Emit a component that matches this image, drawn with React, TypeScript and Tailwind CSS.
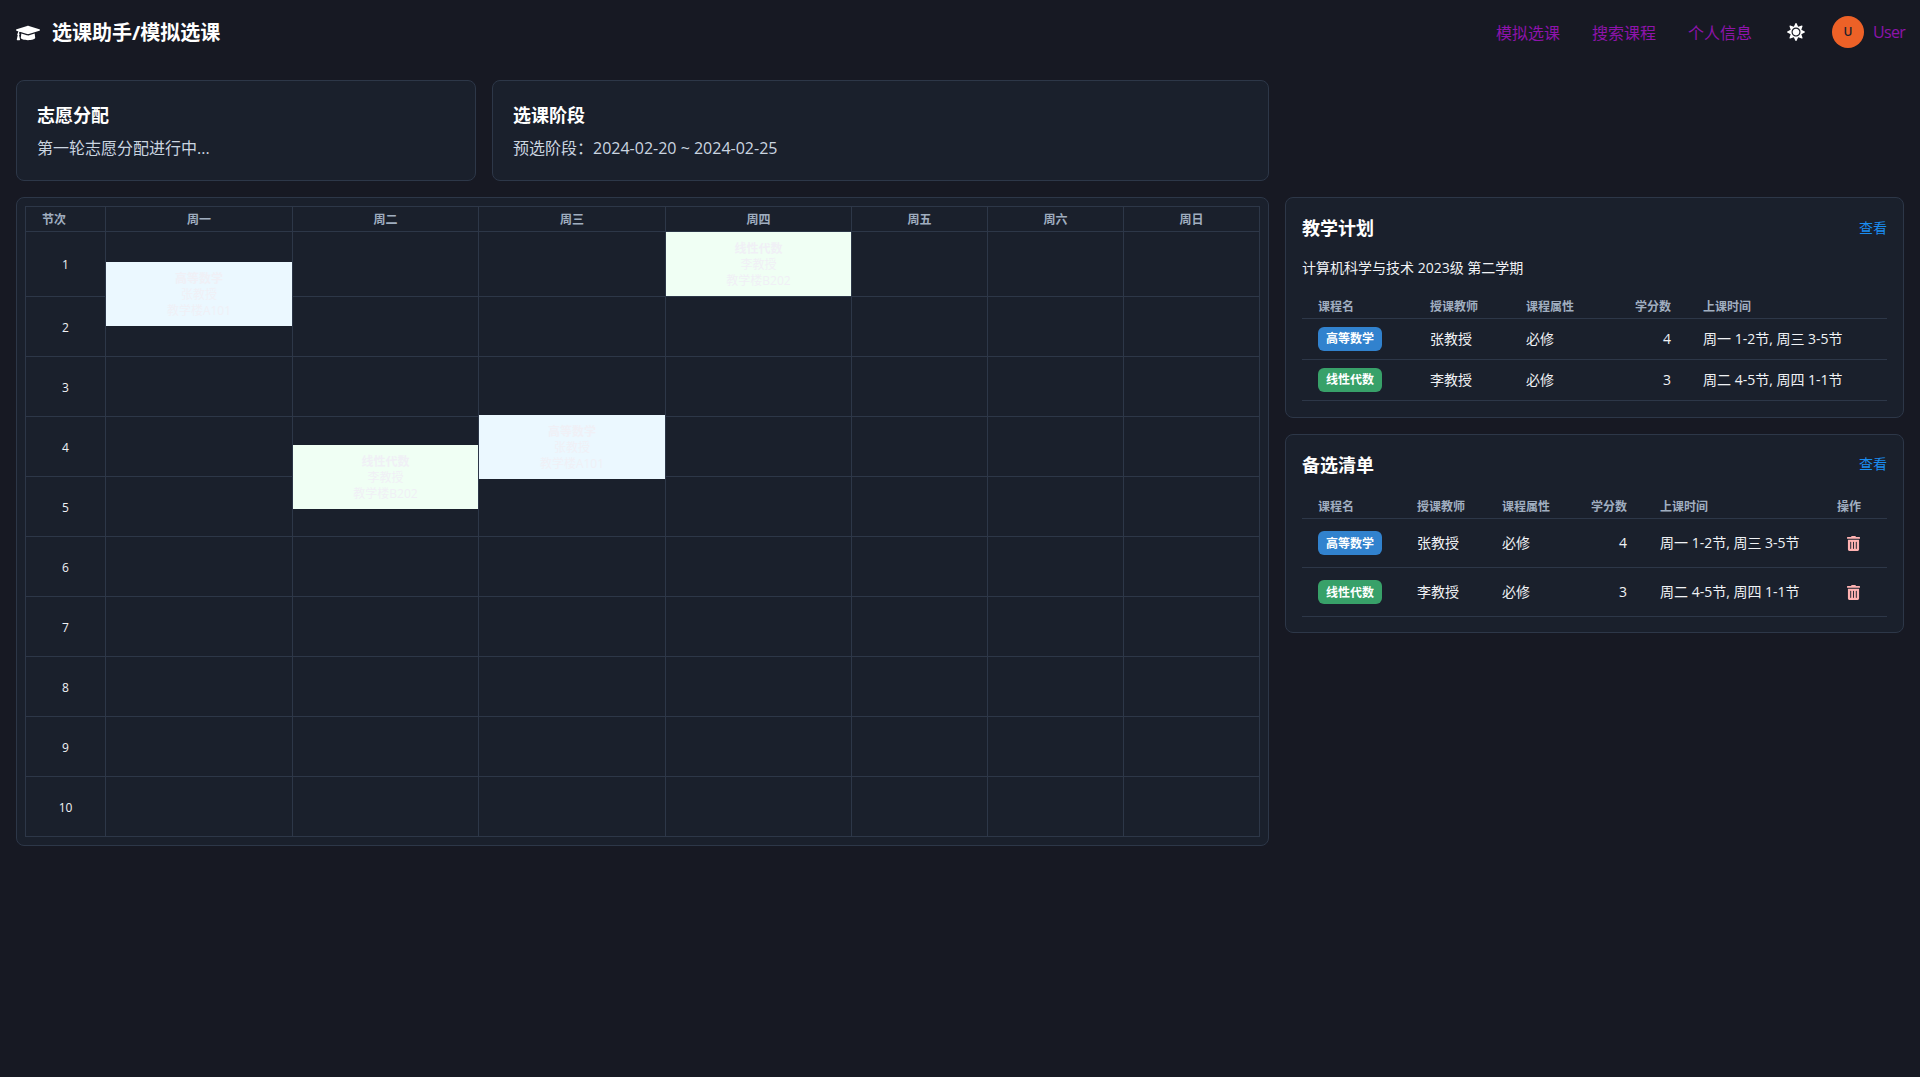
import { FaGraduationCap, FaSun, FaTrashAlt } from "react-icons/fa";

const FONT = "font-['Segoe_UI','Open_Sans','Noto_Sans_CJK_SC',sans-serif]";

function EventCard({ kind, offset }: { kind: "math" | "alg"; offset: string }) {
  const math = kind === "math";
  return (
    <div className={`absolute left-0 right-0 h-16 pt-[9px] text-center text-xs leading-4 text-[#f0f0f6] ${offset} ${math ? "bg-[#ebf8ff]" : "bg-[#f0fff4]"}`}>
      <div className="font-bold">{math ? "高等数学" : "线性代数"}</div>
      <div>{math ? "张教授" : "李教授"}</div>
      <div>{math ? "教学楼A101" : "教学楼B202"}</div>
    </div>
  );
}

function Badge({ kind }: { kind: "math" | "alg" }) {
  return (
    <span className={`inline-flex h-6 w-16 items-center justify-center rounded-md pt-px text-xs font-bold text-white ${kind === "math" ? "bg-[#3182ce]" : "bg-[#38a169]"}`}>
      {kind === "math" ? "高等数学" : "线性代数"}
    </span>
  );
}

const days = ["周一", "周二", "周三", "周四", "周五", "周六", "周日"];
const rows = [1, 2, 3, 4, 5, 6, 7, 8, 9, 10];

function Timetable() {
  return (
    <div className="rounded-lg border border-[#2d3748] bg-[#1a202c] p-2">
      <table className="w-[1234px] table-fixed border-collapse border border-[#2d3748]">
        <colgroup>
          <col className="w-20" />
          <col className="w-[187px]" />
          <col className="w-[186px]" />
          <col className="w-[187px]" />
          <col className="w-[186px]" />
          <col className="w-[136px]" />
          <col className="w-[136px]" />
          <col className="w-[136px]" />
        </colgroup>
        <thead>
          <tr className="h-[25px]">
            <th className="border border-[#2d3748] pl-4 pt-[2px] text-left text-xs font-semibold text-[#a0aec0]">节次</th>
            {days.map((d) => (
              <th key={d} className="border border-[#2d3748] pt-[2px] text-center text-xs font-semibold text-[#a0aec0]">{d}</th>
            ))}
          </tr>
        </thead>
        <tbody>
          {rows.map((r) => (
            <tr key={r} className={r === 1 ? "h-[65px]" : "h-[60px]"}>
              <td className="border border-[#2d3748] pt-[2px] text-center text-xs text-[#f0f2f5]">{r}</td>
              {days.map((d) => {
                const ev =
                  r === 1 && d === "周一" ? <EventCard kind="math" offset="top-[30px]" /> :
                  r === 1 && d === "周四" ? <EventCard kind="alg" offset="top-0" /> :
                  r === 4 && d === "周二" ? <EventCard kind="alg" offset="top-[28px]" /> :
                  r === 4 && d === "周三" ? <EventCard kind="math" offset="top-[-2px]" /> : null;
                return (
                  <td key={d} className="relative border border-[#2d3748] p-0 align-top">
                    {ev}
                  </td>
                );
              })}
            </tr>
          ))}
        </tbody>
      </table>
    </div>
  );
}

function CardHead({ title }: { title: string }) {
  return (
    <div className="mb-4 flex h-[27px] items-center justify-between">
      <h2 className="pt-[2px] text-lg font-bold leading-[25px] text-white">{title}</h2>
      <a className="text-sm text-[#1a8cf0]">查看</a>
    </div>
  );
}

const thCls = "h-6 border-b border-[#2d3748] pl-4 pt-[2px] text-left text-xs font-semibold text-[#a0aec0]";
const tdCls = "border-b border-[#2d3748] pl-4 text-left text-sm text-[#f0f2f5]";

function PlanCard() {
  return (
    <div className="rounded-lg border border-[#2d3748] bg-[#1a202c] p-4">
      <CardHead title="教学计划" />
      <p className="mb-4 text-sm leading-[21px] text-[#f0f2f5]">计算机科学与技术 2023级 第二学期</p>
      <table className="w-full table-fixed border-collapse">
        <colgroup>
          <col className="w-[112px]" />
          <col className="w-[96px]" />
          <col className="w-[88px]" />
          <col className="w-[89px]" />
          <col className="w-[200px]" />
        </colgroup>
        <thead>
          <tr>
            <th className={thCls}>课程名</th>
            <th className={thCls}>授课教师</th>
            <th className={thCls}>课程属性</th>
            <th className={`${thCls} pr-4 text-right`}>学分数</th>
            <th className={thCls}>上课时间</th>
          </tr>
        </thead>
        <tbody>
          <tr className="h-[41px]">
            <td className={tdCls}><Badge kind="math" /></td>
            <td className={tdCls}>张教授</td>
            <td className={tdCls}>必修</td>
            <td className={`${tdCls} pr-4 text-right`}>4</td>
            <td className={tdCls}>周一 1-2节, 周三 3-5节</td>
          </tr>
          <tr className="h-[41px]">
            <td className={tdCls}><Badge kind="alg" /></td>
            <td className={tdCls}>李教授</td>
            <td className={tdCls}>必修</td>
            <td className={`${tdCls} pr-4 text-right`}>3</td>
            <td className={tdCls}>周二 4-5节, 周四 1-1节</td>
          </tr>
        </tbody>
      </table>
    </div>
  );
}

function Trash() {
  return (
    <button className="flex h-8 w-8 items-center justify-center text-[#feb2b2]">
      <FaTrashAlt className="h-[15px] w-[13px]" />
    </button>
  );
}

function WishCard() {
  return (
    <div className="rounded-lg border border-[#2d3748] bg-[#1a202c] px-4 pb-[15px] pt-4">
      <CardHead title="备选清单" />
      <div className="pt-px">
        <table className="w-full table-fixed border-collapse">
          <colgroup>
            <col className="w-[99px]" />
            <col className="w-[85px]" />
            <col className="w-[76px]" />
            <col className="w-[82px]" />
            <col className="w-[177px]" />
            <col className="w-[66px]" />
          </colgroup>
          <thead>
            <tr>
              <th className={thCls}>课程名</th>
              <th className={thCls}>授课教师</th>
              <th className={thCls}>课程属性</th>
              <th className={`${thCls} pr-[17px] text-right`}>学分数</th>
              <th className={thCls}>上课时间</th>
              <th className={thCls}>操作</th>
            </tr>
          </thead>
          <tbody>
            <tr className="h-[49px]">
              <td className={tdCls}><Badge kind="math" /></td>
              <td className={tdCls}>张教授</td>
              <td className={tdCls}>必修</td>
              <td className={`${tdCls} pr-[17px] text-right`}>4</td>
              <td className={tdCls}>周一 1-2节, 周三 3-5节</td>
              <td className={tdCls}><Trash /></td>
            </tr>
            <tr className="h-[49px]">
              <td className={tdCls}><Badge kind="alg" /></td>
              <td className={tdCls}>李教授</td>
              <td className={tdCls}>必修</td>
              <td className={`${tdCls} pr-[17px] text-right`}>3</td>
              <td className={tdCls}>周二 4-5节, 周四 1-1节</td>
              <td className={tdCls}><Trash /></td>
            </tr>
          </tbody>
        </table>
      </div>
    </div>
  );
}

export default function App() {
  return (
    <div className={`min-h-[1077px] bg-[#171923] ${FONT}`}>
      <header className="flex h-16 items-center justify-between px-4">
        <div className="flex items-center gap-3 pt-[2px]">
          <FaGraduationCap className="h-5 w-6 text-white" />
          <h1 className="text-xl font-bold text-white">选课助手/模拟选课</h1>
        </div>
        <nav className="flex items-center text-[#8e14ab]">
          <a className="mr-8 pt-[2px]">模拟选课</a>
          <a className="mr-8 pt-[2px]">搜索课程</a>
          <a className="mr-[35px] pt-[2px]">个人信息</a>
          <FaSun className="mr-[27px] h-[18px] w-[18px] text-white" />
          <div className="mr-[9px] flex h-8 w-8 items-center justify-center rounded-full bg-[#ed6127] text-xs font-semibold text-[#1a202c]">U</div>
          <span className="w-[31px] whitespace-nowrap tracking-[-0.7px]">User</span>
        </nav>
      </header>
      <main className="flex gap-4 px-4 pt-4">
        <div className="w-[1253px] shrink-0">
          <div className="mb-4 flex gap-4">
            <section className="w-[460px] rounded-lg border border-[#2d3748] bg-[#1a202c] p-5">
              <h2 className="mb-2 pt-[2px] text-lg font-bold leading-[25px] text-white">志愿分配</h2>
              <p className="text-[#cbd5e0]">第一轮志愿分配进行中...</p>
            </section>
            <section className="flex-1 rounded-lg border border-[#2d3748] bg-[#1a202c] p-5">
              <h2 className="mb-2 pt-[2px] text-lg font-bold leading-[25px] text-white">选课阶段</h2>
              <p className="text-[#cbd5e0]">预选阶段：2024-02-20 ~ 2024-02-25</p>
            </section>
          </div>
          <Timetable />
        </div>
        <aside className="mt-[117px] flex min-w-0 flex-1 flex-col gap-4">
          <PlanCard />
          <WishCard />
        </aside>
      </main>
    </div>
  );
}
